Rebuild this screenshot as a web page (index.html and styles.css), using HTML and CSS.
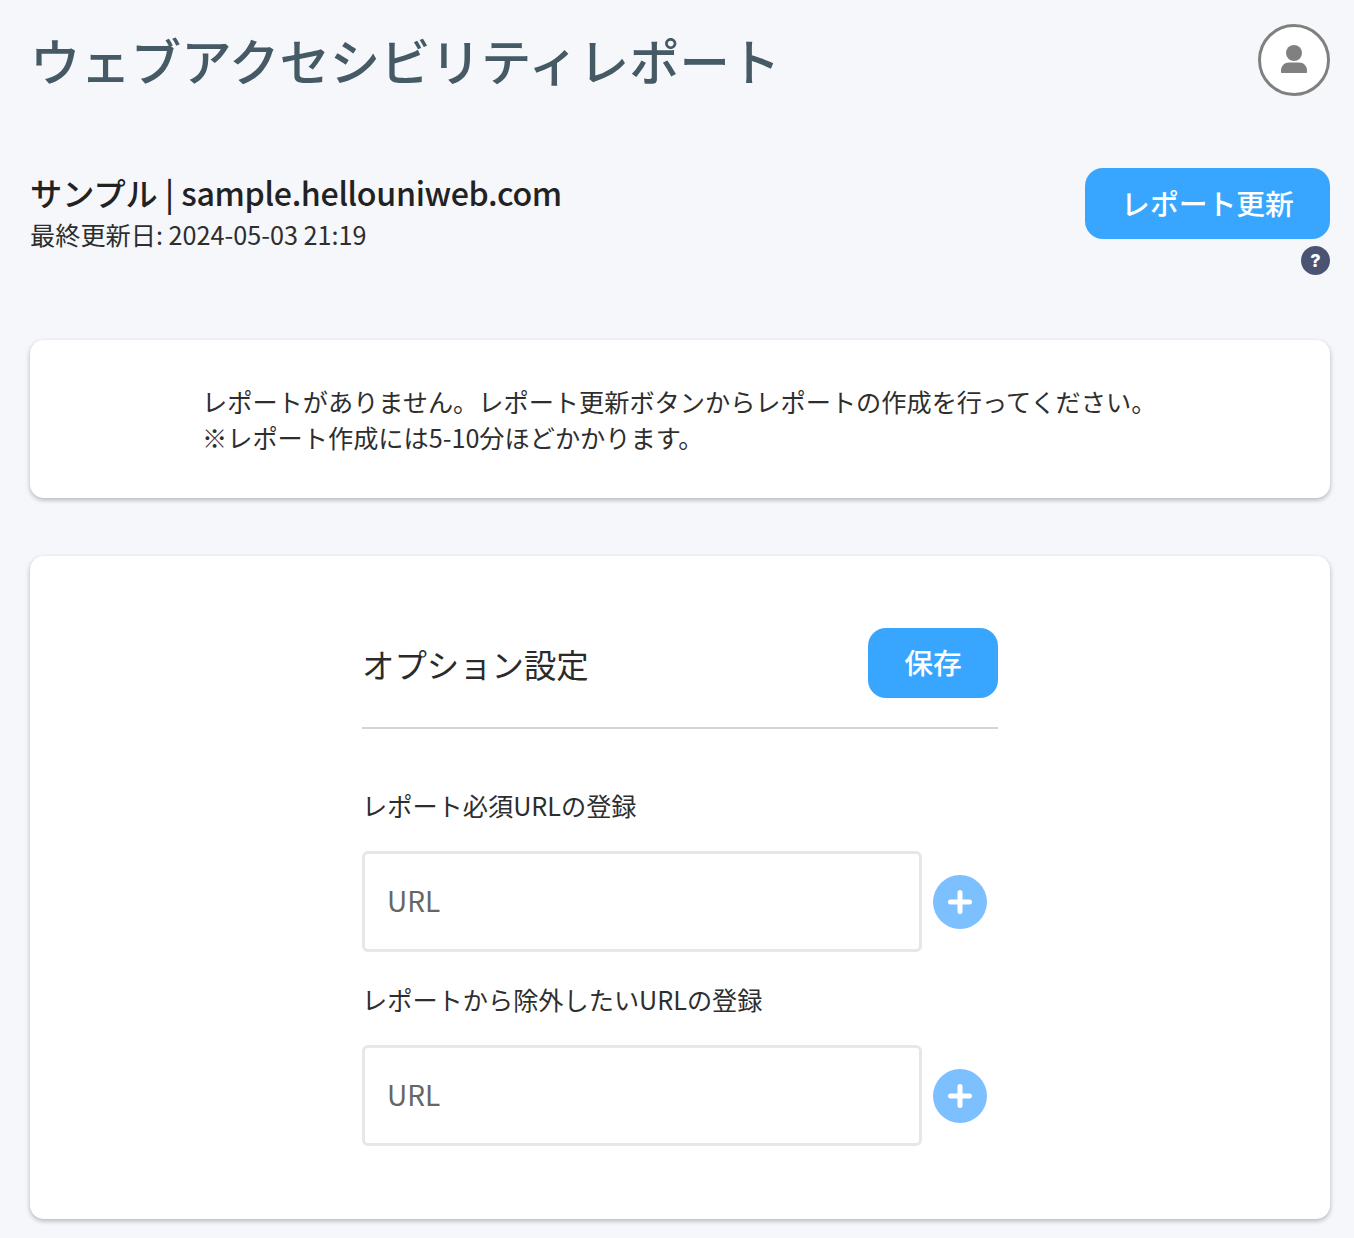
FILE: index.html
```html
<!DOCTYPE html>
<html lang="ja">
<head>
<meta charset="utf-8">
<title>ウェブアクセシビリティレポート</title>
<link rel="stylesheet" href="styles.css">
</head>
<body>
<div class="page">
  <header class="top">
    <h1 class="title">ウェブアクセシビリティレポート</h1>
    <div class="avatar">
      <svg viewBox="0 0 26 28" width="26" height="28" aria-hidden="true"><circle cx="13" cy="8" r="8" fill="#808080"/><path d="M0 27v-1.500c0-4.500 3.500-8 8-8h10c4.500 0 8 3.500 8 8v1.500c0 .6-.4 1-1 1h-24c-.6 0-1-.4-1-1z" fill="#808080"/></svg>
    </div>
  </header>
  <section class="site">
    <div class="site-info">
      <h2 class="site-name">サンプル | <span class="site-host">sample.hellouniweb.com</span></h2>
      <p class="site-date">最終更新日: 2024-05-03 21:19</p>
    </div>
    <div class="site-actions">
      <button class="btn btn-wide" type="button">レポート更新</button>
      <span class="help">?</span>
    </div>
  </section>
  <section class="card card-notice">
    <p class="notice">レポートがありません。レポート更新ボタンからレポートの作成を行ってください。<br>※レポート作成には5-10分ほどかかります。</p>
  </section>
  <section class="card card-options">
    <div class="options">
      <div class="options-head">
        <h3 class="options-title">オプション設定</h3>
        <button class="btn btn-save" type="button">保存</button>
      </div>
      <p class="field-label">レポート必須URLの登録</p>
      <div class="field-row">
        <input class="url" type="text" placeholder="URL">
        <span class="add"><svg viewBox="0 0 24 24" width="24" height="24" aria-hidden="true"><path d="M12 2.500v19M2.500 12h19" stroke="#fff" stroke-width="5" stroke-linecap="round"/></svg></span>
      </div>
      <p class="field-label field-label-next">レポートから除外したいURLの登録</p>
      <div class="field-row">
        <input class="url" type="text" placeholder="URL">
        <span class="add"><svg viewBox="0 0 24 24" width="24" height="24" aria-hidden="true"><path d="M12 2.500v19M2.500 12h19" stroke="#fff" stroke-width="5" stroke-linecap="round"/></svg></span>
      </div>
    </div>
  </section>
</div>
</body>
</html>
```
FILE: styles.css
```css
* { box-sizing: border-box; }
html, body { margin: 0; padding: 0; }
body {
  background: #f5f7fb;
  color: #2b2b2b;
  font-family: "Noto Sans CJK JP", "Noto Sans", sans-serif;
  height: 1238px;
  overflow: hidden;
}
.page { padding: 24px 24px 0 30px; width: 1354px; }
.top { display: flex; justify-content: space-between; align-items: flex-start; height: 72px; }
.title { margin: 0; font-size: 50.4px; line-height: 72px; font-weight: 500; color: #455a64; }
.avatar {
  width: 72px; height: 72px; border-radius: 50%;
  border: 3px solid #808080; background: #fff; padding-bottom: 2px;
  display: flex; align-items: center; justify-content: center;
}
.site { display: flex; justify-content: space-between; margin-top: 72px; height: 172px; }
.site-name { margin: 4px 0 0; font-size: 32.2px; line-height: 40px; font-weight: 500; color: #222; }
.site-host { letter-spacing: -0.35px; }
.site-date { margin: 4px 0 0; font-size: 25.2px; line-height: 36px; color: #2e2e2e; }
.site-actions { display: flex; flex-direction: column; align-items: flex-end; }
.btn {
  border: 0; background: #38a6ff; color: #fff;
  font-family: inherit; font-weight: 500; font-size: 28.8px;
  border-radius: 18px; height: 71px; padding: 0 0 2px;
}
.btn-wide { width: 245px; }
.btn-save { width: 130px; height: 70px; padding-bottom: 4px; }
.help {
  margin-top: 7px; width: 29px; height: 29px; border-radius: 50%;
  background: #4a5472; color: #fff; font-family: Inter, sans-serif; font-size: 18px; font-weight: 800;
  display: flex; align-items: center; justify-content: center; line-height: 1;
}
.card { background: #fff; border-radius: 14px; box-shadow: 0 2px 5px rgba(0,0,0,.27); width: 1300px; }
.card-notice { height: 158px; padding: 43px 100px 0 172px; }
.notice { margin: 0; font-size: 25.2px; line-height: 36px; color: #2e2e2e; white-space: nowrap; }
.card-options { margin-top: 58px; height: 663px; padding: 72px 0 0 332px; }
.options { width: 636px; }
.options-head {
  display: flex; justify-content: space-between; align-items: flex-start;
  height: 101px; border-bottom: 2px solid #d4d4d4;
}
.options-title { margin: -2px 0 0; font-size: 32.4px; line-height: 76px; font-weight: 400; color: #2b2b2b; }
.field-label { margin: 58px 0 28px; font-size: 25.2px; line-height: 36px; color: #2e2e2e; }
.field-label-next { margin-top: 29px; }
.field-row { display: flex; align-items: center; gap: 11px; }
.url {
  width: 560px; height: 101px; border: 3px solid #e5e7e8; border-radius: 6px;
  padding: 0 22px 4px; font-family: inherit; font-size: 28px; color: #333; background: #fff; outline: none;
}
.url::placeholder { color: #666; opacity: 1; }
.add {
  width: 54px; height: 54px; border-radius: 50%; background: #7cc0ff;
  display: flex; align-items: center; justify-content: center;
}
```
